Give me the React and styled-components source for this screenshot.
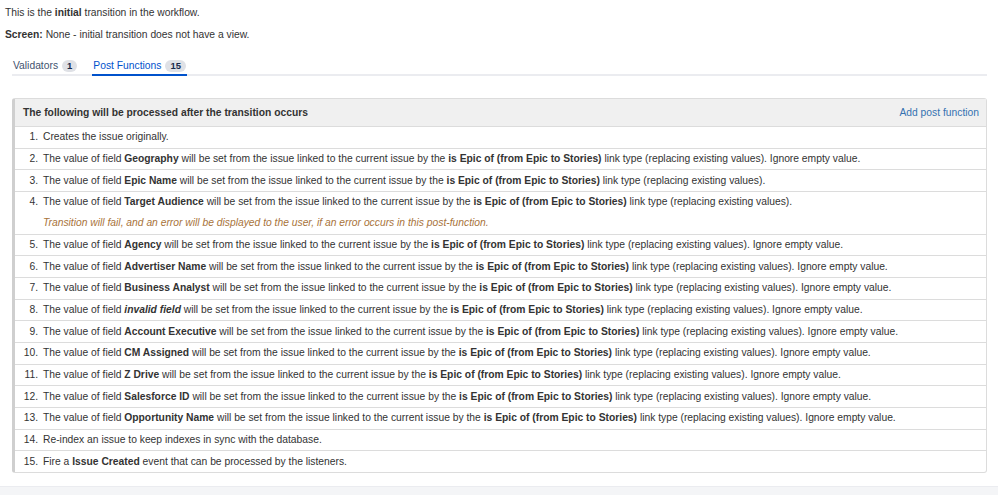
import React from 'react';
import styled, { createGlobalStyle } from 'styled-components';

const Global = createGlobalStyle`
    html, body {
        margin: 0;
        padding: 0;
        background: #fff;
    }
    body {
        font-family: "Liberation Sans", Arial, sans-serif;
        font-size: 10.3px;
        color: #333;
    }
`

const Page = styled.div`
    width: 998px;
    height: 495px;
    display: flex;
    flex-direction: column;
    overflow: hidden;
`

const Content = styled.div`
    flex: 1;
    padding: 6px 11px 0 5px;
`

const Line = styled.p`
    margin: 0;
    line-height: 14px;
    margin-bottom: ${p => p.gap || 0}px;
`

const Tabs = styled.div`
    display: flex;
    gap: 14px;
    margin: 17px 0 0 7px;
    border-bottom: 2px solid #ebecf0;
`

const Tab = styled.div`
    display: flex;
    align-items: center;
    gap: 4px;
    padding: 0 1px 1px;
    margin-bottom: -2px;
    line-height: 14px;
    color: ${p => p.active ? '#0052cc' : '#42526e'};
    border-bottom: 2px solid ${p => p.active ? '#0052cc' : 'transparent'};
`

const Badge = styled.span`
    display: inline-block;
    background: #dfe1e6;
    color: #172b4d;
    font-weight: bold;
    font-size: 9.5px;
    line-height: 12px;
    padding: 0 5px;
    border-radius: 7px;
`

const Panel = styled.div`
    margin: 22px 0 0 7px;
    border: 1px solid #dcdcdc;
    border-left: 3px solid #cfcfcf;
    border-radius: 3px;
`

const Header = styled.div`
    display: flex;
    justify-content: space-between;
    align-items: center;
    height: 28px;
    box-sizing: border-box;
    padding: 0 7px 1px 8px;
    background: #f0f0f0;
    border-bottom: 1px solid #dcdcdc;
    font-weight: bold;
    color: #333;
`

const AddLink = styled.a`
    font-weight: normal;
    color: #3572b0;
    text-decoration: none;
    cursor: pointer;
`

const List = styled.ol`
    margin: 0;
    padding: 0;
    list-style: none;
`

const Item = styled.li`
    display: flex;
    padding: 3.33px 0;
    line-height: 14px;
    border-bottom: ${p => p.last ? 'none' : '1px solid #dcdcdc'};
`

const Num = styled.span`
    width: 23px;
    flex: none;
    text-align: right;
    padding-right: 5px;
`

const Body = styled.div`
    flex: 1;
`

const ErrorNote = styled.div`
    margin-top: 7px;
    font-style: italic;
    color: #a8733a;
`

const Footer = styled.div`
    height: 8px;
    background: #f4f5f7;
    border-top: 1px solid #ebecf0;
`

const linked = (field, tail) => (
    <>
        The value of field <b>{field}</b> will be set from the issue linked to the current issue by the <b>is Epic of (from Epic to Stories)</b> link type (replacing existing values).{tail ? ' Ignore empty value.' : ''}
    </>
)

const items = [
    { text: 'Creates the issue originally.' },
    { text: linked('Geography', true) },
    { text: linked('Epic Name', false) },
    { text: linked('Target Audience', false), error: true },
    { text: linked('Agency', true) },
    { text: linked('Advertiser Name', true) },
    { text: linked('Business Analyst', true) },
    { text: <>The value of field <b><i>invalid field</i></b> will be set from the issue linked to the current issue by the <b>is Epic of (from Epic to Stories)</b> link type (replacing existing values). Ignore empty value.</> },
    { text: linked('Account Executive', true) },
    { text: linked('CM Assigned', true) },
    { text: linked('Z Drive', true) },
    { text: linked('Salesforce ID', true) },
    { text: linked('Opportunity Name', true) },
    { text: 'Re-index an issue to keep indexes in sync with the database.' },
    { text: <>Fire a <b>Issue Created</b> event that can be processed by the listeners.</> },
]

export default function App() {
    return (
        <Page>
            <Global />
            <Content>
                <Line gap={8}>This is the <b>initial</b> transition in the workflow.</Line>
                <Line><b>Screen:</b> None - initial transition does not have a view.</Line>
                <Tabs>
                    <Tab>Validators <Badge>1</Badge></Tab>
                    <Tab active>Post Functions <Badge>15</Badge></Tab>
                </Tabs>
                <Panel>
                    <Header>
                        <span>The following will be processed after the transition occurs</span>
                        <AddLink>Add post function</AddLink>
                    </Header>
                    <List>
                        {items.map((it, i) => (
                            <Item key={i} last={i === items.length - 1}>
                                <Num>{i + 1}.</Num>
                                <Body>
                                    {it.text}
                                    {it.error && (
                                        <ErrorNote>Transition will fail, and an error will be displayed to the user, if an error occurs in this post-function.</ErrorNote>
                                    )}
                                </Body>
                            </Item>
                        ))}
                    </List>
                </Panel>
            </Content>
            <Footer />
        </Page>
    )
}
